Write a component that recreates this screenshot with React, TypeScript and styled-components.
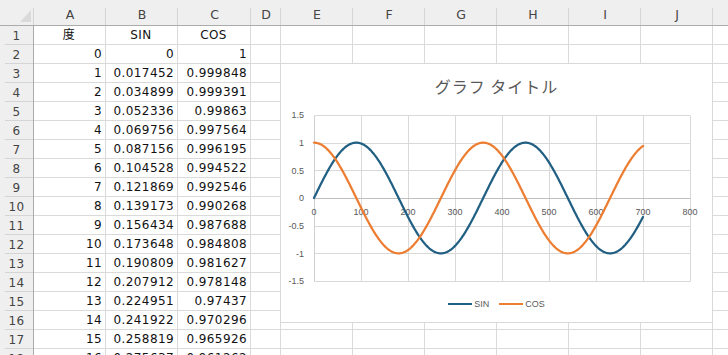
import React from "react";
import styled, { createGlobalStyle } from "styled-components";

const GlobalStyle = createGlobalStyle`
  html, body {
    margin: 0;
    padding: 0;
    background: #ffffff;
  }
  body {
    width: 728px;
    height: 355px;
    overflow: hidden;
  }
`;

const COLS = ["A", "B", "C", "D", "E", "F", "G", "H", "I", "J", "K"];
const WIDTHS = [72, 72, 73, 30, 72, 72, 72, 72, 72, 72, 72];
const ROW_COUNT = 18;

const SIN_COLOR = "#215f83";
const COS_COLOR = "#ed7d31";

const fmt = (v: number) => String(parseFloat(v.toFixed(6)));
const rad = (d: number) => (d * Math.PI) / 180;

const Sheet = styled.div`
  position: relative;
  width: 728px;
  height: 355px;
  overflow: hidden;
  font-family: "DejaVu Sans", "Noto Sans CJK JP", sans-serif;
`;

const Grid = styled.div<{ $cols: string }>`
  display: grid;
  grid-template-columns: ${(p) => p.$cols};
  grid-template-rows: 26px;
  grid-auto-rows: 19px;
`;

const Corner = styled.div`
  display: flex;
  justify-content: flex-end;
  align-items: flex-end;
  padding: 0 3px 3px 0;
  box-sizing: border-box;
  background: linear-gradient(#d5d5d5, #d5d5d5) right 8px / 1px calc(100% - 8px) no-repeat,
    #efefef;
  border-bottom: 1px solid #ababab;
`;

const CornerMark = styled.span`
  width: 11px;
  height: 12px;
  background: #dadada;
  clip-path: polygon(100% 0, 100% 100%, 0 100%);
`;

const ColHeader = styled.div`
  display: flex;
  justify-content: center;
  align-items: center;
  padding-top: 4px;
  box-sizing: border-box;
  background: linear-gradient(#d5d5d5, #d5d5d5) right 8px / 1px calc(100% - 8px) no-repeat,
    #efefef;
  border-bottom: 1px solid #ababab;
  color: #444444;
  font-size: 12.5px;
`;

const RowHeader = styled.div`
  display: flex;
  justify-content: center;
  align-items: center;
  box-sizing: border-box;
  background: linear-gradient(#d5d5d5, #d5d5d5) 5px bottom / calc(100% - 5px) 1px no-repeat,
    #efefef;
  border-right: 1px solid #ababab;
  color: #444444;
  font-size: 12px;
  letter-spacing: 0.3px;
`;

const Cell = styled.div<{ $align?: "left" | "center" | "right" }>`
  box-sizing: border-box;
  border-right: 1px solid #dadada;
  border-bottom: 1px solid #dadada;
  padding: 0 3px 0 2px;
  line-height: 19px;
  font-size: 12px;
  letter-spacing: 0.4px;
  color: #111111;
  text-align: ${(p) => p.$align ?? "left"};
  white-space: nowrap;
  overflow: hidden;
`;

/* chart floats over the cells E3:J17 */
const ChartBox = styled.div`
  position: absolute;
  left: 280px;
  top: 63px;
  width: 433px;
  height: 260px;
  box-sizing: border-box;
  background: #ffffff;
  border: 1px solid #d9d9d9;
  display: flex;
  flex-direction: column;
`;

const ChartTitle = styled.div`
  height: 44px;
  padding-top: 12px;
  box-sizing: border-box;
  text-align: center;
  font-family: "Noto Sans CJK JP", sans-serif;
  font-size: 16px;
  line-height: 20px;
  color: #595959;
  letter-spacing: 1px;
`;

const Plot = styled.svg`
  display: block;
  flex: none;
`;

const Legend = styled.div`
  height: 20px;
  display: flex;
  justify-content: center;
  align-items: center;
  gap: 10px;
  font-family: "Liberation Sans", Arial, sans-serif;
  font-size: 9px;
  color: #595959;
`;

const LegendItem = styled.div`
  display: flex;
  align-items: center;
  gap: 2px;
`;

const Swatch = styled.span<{ $color: string }>`
  width: 24px;
  height: 2.5px;
  background: ${(p) => p.$color};
`;

const PLOT_L = 33;
const PLOT_W = 376;
const PLOT_T = 7;
const PLOT_H = 166;
const px = (x: number) => PLOT_L + (x * PLOT_W) / 800;
const py = (y: number) => PLOT_T + PLOT_H / 2 - (y * PLOT_H) / 3;

const curve = (fn: (d: number) => number) => {
  const pts: string[] = [];
  for (let d = 0; d <= 700; d += 2) {
    pts.push(`${px(d).toFixed(2)},${py(fn(rad(d))).toFixed(2)}`);
  }
  return "M" + pts.join(" L");
};

const Chart: React.FC = () => {
  const xs = [0, 100, 200, 300, 400, 500, 600, 700, 800];
  const ys = [1.5, 1, 0.5, 0, -0.5, -1, -1.5];
  return (
    <ChartBox>
      <ChartTitle>グラフ タイトル</ChartTitle>
      <Plot width={431} height={186} viewBox="0 0 431 186">
        {xs.map((x) => (
          <line
            key={"vx" + x}
            x1={Math.round(px(x)) + 0.5}
            x2={Math.round(px(x)) + 0.5}
            y1={PLOT_T + 0.5}
            y2={PLOT_T + PLOT_H + 0.5}
            stroke={x === 0 ? "#cfcfcf" : "#d9d9d9"}
            strokeWidth={1}
          />
        ))}
        {ys.map((y) => (
          <line
            key={"hy" + y}
            x1={PLOT_L + 0.5}
            x2={PLOT_L + PLOT_W + 0.5}
            y1={Math.round(py(y)) + 0.5}
            y2={Math.round(py(y)) + 0.5}
            stroke={y === 0 ? "#bfbfbf" : "#d9d9d9"}
            strokeWidth={1}
          />
        ))}
        {ys.map((y) => (
          <text
            key={"ly" + y}
            x={23}
            y={py(y) + 3.2}
            textAnchor="end"
            fontFamily="Liberation Sans, Arial, sans-serif"
            fontSize={9}
            fill="#595959"
          >
            {y}
          </text>
        ))}
        {xs.map((x) => (
          <text
            key={"lx" + x}
            x={px(x)}
            y={py(0) + 17}
            textAnchor="middle"
            fontFamily="Liberation Sans, Arial, sans-serif"
            fontSize={9}
            fill="#595959"
          >
            {x}
          </text>
        ))}
        <path d={curve(Math.sin)} fill="none" stroke={SIN_COLOR} strokeWidth={2.25} strokeLinecap="round" strokeLinejoin="round" />
        <path d={curve(Math.cos)} fill="none" stroke={COS_COLOR} strokeWidth={2.25} strokeLinecap="round" strokeLinejoin="round" />
      </Plot>
      <Legend>
        <LegendItem>
          <Swatch $color={SIN_COLOR} />
          SIN
        </LegendItem>
        <LegendItem>
          <Swatch $color={COS_COLOR} />
          COS
        </LegendItem>
      </Legend>
    </ChartBox>
  );
};

const cellContent = (row: number, col: number): [string, "left" | "center" | "right"] => {
  if (col > 2) return ["", "left"];
  if (row === 1) return [["度", "SIN", "COS"][col], "center"];
  const deg = row - 2;
  if (col === 0) return [String(deg), "right"];
  if (col === 1) return [fmt(Math.sin(rad(deg))), "right"];
  return [fmt(Math.cos(rad(deg))), "right"];
};

const App: React.FC = () => {
  const template = ["34px", ...WIDTHS.map((w) => `${w}px`)].join(" ");
  const rows = Array.from({ length: ROW_COUNT }, (_, i) => i + 1);

  return (
    <Sheet>
      <GlobalStyle />
      <Grid $cols={template}>
        <Corner>
          <CornerMark />
        </Corner>
        {COLS.map((c) => (
          <ColHeader key={c}>{c}</ColHeader>
        ))}
        {rows.map((r) => (
          <React.Fragment key={r}>
            <RowHeader>{r}</RowHeader>
            {COLS.map((c, ci) => {
              const [text, align] = cellContent(r, ci);
              return (
                <Cell key={c} $align={align}>
                  {text}
                </Cell>
              );
            })}
          </React.Fragment>
        ))}
      </Grid>
      <Chart />
    </Sheet>
  );
};

export default App;
